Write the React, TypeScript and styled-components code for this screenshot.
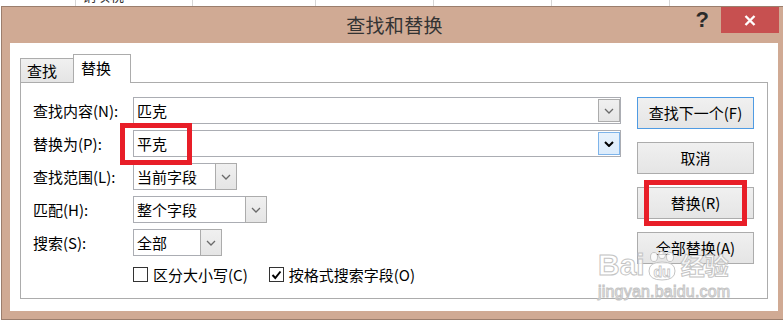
import React from "react";
import styled, { createGlobalStyle, css } from "styled-components";

const Global = createGlobalStyle`
  html, body { margin: 0; padding: 0; background: #fff; }
  body { font-family: "Noto Sans CJK SC", "Noto Sans", sans-serif; }
  * { box-sizing: border-box; }
`;

const Page = styled.div`
  position: relative;
  width: 783px;
  height: 321px;
  overflow: hidden;
  background: #fff;
`;

const Sheet = styled.div`
  display: flex;
  height: 6px;
  overflow: hidden;
`;

const Cell = styled.div<{ $w: number }>`
  flex: 0 0 ${(p) => p.$w}px;
  height: 6px;
  border-right: 1px solid #d6d6d6;
  overflow: hidden;
  font-size: 14px;
  line-height: 14px;
  color: #333;
  padding-left: 6px;
`;

const CellText = styled.div`
  margin-top: -12px;
`;

const Dialog = styled.div`
  margin-left: 1px;
  width: 787px;
  height: 314px;
  border: 1px solid #9b7e6d;
  background: #d0aa94;
  display: flex;
  flex-direction: column;
`;

const TitleBar = styled.div`
  height: 36px;
  display: grid;
  grid-template-columns: 1fr auto 1fr;
  align-items: start;
`;

const Title = styled.div`
  grid-column: 2;
  font-size: 19px;
  line-height: 36px;
  color: #333;
  letter-spacing: 0.3px;
`;

const Controls = styled.div`
  grid-column: 3;
  justify-self: end;
  display: flex;
  align-items: flex-start;
  margin-right: 8px;
`;

const Help = styled.div`
  font-family: "Liberation Sans", Arial, sans-serif;
  font-weight: bold;
  font-size: 22px;
  line-height: 26px;
  color: #2a2a2a;
  margin-right: 12px;
`;

const Close = styled.div`
  width: 58px;
  height: 26px;
  background: #c75050;
  display: flex;
  align-items: center;
  justify-content: center;
`;

const Client = styled.div`
  flex: 1;
  margin: 0 9px 8px 8px;
  background: #fff;
  padding: 11px 10px 12px 10px;
  display: flex;
  flex-direction: column;
`;

const Tabs = styled.div`
  display: flex;
  align-items: flex-end;
  height: 28px;
`;

const Tab = styled.div<{ $active?: boolean }>`
  font-size: 15px;
  color: #000;
  border: 1px solid #acacac;
  border-bottom: none;
  ${(p) =>
    p.$active
      ? css`
          width: 58px;
          height: 29px;
          margin-left: -1px;
          margin-bottom: -1px;
          background: #fff;
          position: relative;
          z-index: 1;
          padding-left: 7px;
          line-height: 25px;
        `
      : css`
          width: 54px;
          height: 24px;
          background: linear-gradient(#f0f0f0, #e5e5e5);
          padding-left: 6px;
          line-height: 23px;
        `}
`;

const Panel = styled.div`
  height: 217px;
  border: 1px solid #acacac;
  display: flex;
  gap: 16px;
  padding: 14px 13px 0 12px;
`;

const Form = styled.div`
  width: 588px;
  display: flex;
  flex-direction: column;
  gap: 6px;
`;

const FieldRow = styled.div`
  display: flex;
  align-items: center;
  height: 27px;
`;

const Label = styled.div`
  width: 100px;
  font-size: 15px;
  line-height: 18px;
  color: #000;
`;

const Combo = styled.div<{ $w: number }>`
  width: ${(p) => p.$w}px;
  height: 27px;
  border: 1px solid #abadb3;
  display: flex;
  align-items: stretch;
  background: #fff;
`;

const ComboText = styled.div`
  flex: 1;
  padding-left: 3px;
  font-size: 15px;
  line-height: 25px;
  color: #000;
`;

const DropBtn = styled.div<{ $hot?: boolean; $inset?: boolean }>`
  width: 22px;
  display: flex;
  align-items: center;
  justify-content: center;
  ${(p) =>
    p.$inset
      ? css`
          margin: 1px 0 1px 0;
        `
      : css`
          margin: -1px -1px -1px 0;
        `}
  ${(p) =>
    p.$hot
      ? css`
          background: linear-gradient(#e8f2fc, #dcecfc);
          border: 1px solid #7eb4ea;
        `
      : css`
          background: linear-gradient(#f0f0f0, #e5e5e5);
          border: 1px solid #acacac;
        `}
`;

const CheckRow = styled.div`
  display: flex;
  align-items: center;
  margin-top: 4px;
  padding-left: 100px;
  height: 17px;
`;

const CheckItem = styled.div`
  display: flex;
  align-items: center;
  gap: 5px;
  margin-right: 21px;
  font-size: 15px;
  line-height: 17px;
  color: #000;
`;

const Box = styled.div`
  width: 15px;
  height: 15px;
  border: 1px solid #333;
  background: #fff;
  display: flex;
  align-items: center;
  justify-content: center;
`;

const Buttons = styled.div`
  width: 117px;
  display: flex;
  flex-direction: column;
  gap: 13px;
`;

const Btn = styled.div<{ $primary?: boolean }>`
  height: 32px;
  border: 1px solid ${(p) => (p.$primary ? "#4f9be3" : "#acacac")};
  background: linear-gradient(#f0f0f0, #e5e5e5);
  font-size: 15px;
  line-height: 30px;
  text-align: center;
  color: #000;
`;

const RedBox = styled.div<{ $x: number; $y: number; $w: number; $h: number }>`
  position: absolute;
  left: ${(p) => p.$x}px;
  top: ${(p) => p.$y}px;
  width: ${(p) => p.$w}px;
  height: ${(p) => p.$h}px;
  border: 5px solid #e81e28;
  z-index: 5;
`;

const Watermark = styled.div`
  position: absolute;
  left: 598px;
  top: 249px;
  z-index: 6;
  color: rgba(255, 255, 255, 0.75);
  -webkit-text-stroke: 1px #c4c4c4;
  font-family: "Liberation Sans", Arial, sans-serif;
  pointer-events: none;
`;

const MarkLine = styled.div`
  display: flex;
  align-items: flex-end;
  font-size: 30px;
  line-height: 32px;
  font-weight: bold;
`;

const CnMark = styled.span`
  font-family: "Noto Sans CJK SC", sans-serif;
  font-size: 24px;
  margin-left: 2px;
`;

const Site = styled.div`
  font-size: 16px;
  line-height: 18px;
  margin-top: 2px;
  letter-spacing: 0.2px;
`;

const Chevron = ({ dark }: { dark?: boolean }) => (
  <svg width="10" height="6" viewBox="0 0 10 6">
    <path
      d="M1 1 L5 5 L9 1"
      fill="none"
      stroke={dark ? "#000" : "#6a6a6a"}
      strokeWidth={dark ? 2 : 1.3}
    />
  </svg>
);

const Paw = () => (
  <svg width="34" height="30" viewBox="0 0 34 30">
    <g fill="rgba(255,255,255,0.8)" stroke="#c4c4c4" strokeWidth="1">
      <ellipse cx="9" cy="6" rx="3.5" ry="4.5" />
      <ellipse cx="17" cy="4" rx="3.5" ry="3.8" />
      <ellipse cx="25" cy="6" rx="3.5" ry="4.5" />
      <path d="M4 20 Q4 11 17 11 Q30 11 30 20 Q30 29 17 29 Q4 29 4 20 Z" />
    </g>
    <text
      x="17"
      y="26"
      textAnchor="middle"
      fontSize="14"
      fontWeight="bold"
      fontFamily="Liberation Sans, Arial, sans-serif"
      fill="#fff"
      stroke="#c4c4c4"
      strokeWidth="0.8"
    >
      du
    </text>
  </svg>
);

const fields = [
  { label: "查找内容(N):", value: "匹克", w: 488, inset: true, hot: false },
  { label: "替换为(P):", value: "平克", w: 488, inset: true, hot: true },
  { label: "查找范围(L):", value: "当前字段", w: 104, inset: false, hot: false },
  { label: "匹配(H):", value: "整个字段", w: 134, inset: false, hot: false },
  { label: "搜索(S):", value: "全部", w: 89, inset: false, hot: false },
];

export default function App() {
  return (
    <>
      <Global />
      <Page>
        <Sheet>
          <Cell $w={76} />
          <Cell $w={117}>
            <CellText>销项税</CellText>
          </Cell>
          <Cell $w={123} />
          <Cell $w={118} />
          <Cell $w={118} />
          <Cell $w={118} />
          <Cell $w={118} />
        </Sheet>
        <Dialog>
          <TitleBar>
            <Title>查找和替换</Title>
            <Controls>
              <Help>?</Help>
              <Close>
                <svg width="12" height="11" viewBox="0 0 12 11">
                  <path d="M1.5 1 L10.5 10 M10.5 1 L1.5 10" stroke="#fff" strokeWidth="2.4" />
                </svg>
              </Close>
            </Controls>
          </TitleBar>
          <Client>
            <Tabs>
              <Tab>查找</Tab>
              <Tab $active>替换</Tab>
            </Tabs>
            <Panel>
              <Form>
                {fields.map((f) => (
                  <FieldRow key={f.label}>
                    <Label>{f.label}</Label>
                    <Combo $w={f.w}>
                      <ComboText>{f.value}</ComboText>
                      <DropBtn $hot={f.hot} $inset={f.inset}>
                        <Chevron dark={f.hot} />
                      </DropBtn>
                    </Combo>
                  </FieldRow>
                ))}
                <CheckRow>
                  <CheckItem>
                    <Box />
                    区分大小写(C)
                  </CheckItem>
                  <CheckItem>
                    <Box>
                      <svg width="11" height="10" viewBox="0 0 11 10">
                        <path d="M1.5 5 L4.3 8 L9.5 1.5" fill="none" stroke="#000" strokeWidth="2" />
                      </svg>
                    </Box>
                    按格式搜索字段(O)
                  </CheckItem>
                </CheckRow>
              </Form>
              <Buttons>
                <Btn $primary>查找下一个(F)</Btn>
                <Btn>取消</Btn>
                <Btn>替换(R)</Btn>
                <Btn>全部替换(A)</Btn>
              </Buttons>
            </Panel>
          </Client>
        </Dialog>
        <RedBox $x={120} $y={123} $w={72} $h={42} />
        <RedBox $x={644} $y={180} $w={103} $h={46} />
        <Watermark>
          <MarkLine>
            Bai
            <Paw />
            <CnMark>经验</CnMark>
          </MarkLine>
          <Site>jingyan.baidu.com</Site>
        </Watermark>
      </Page>
    </>
  );
}
